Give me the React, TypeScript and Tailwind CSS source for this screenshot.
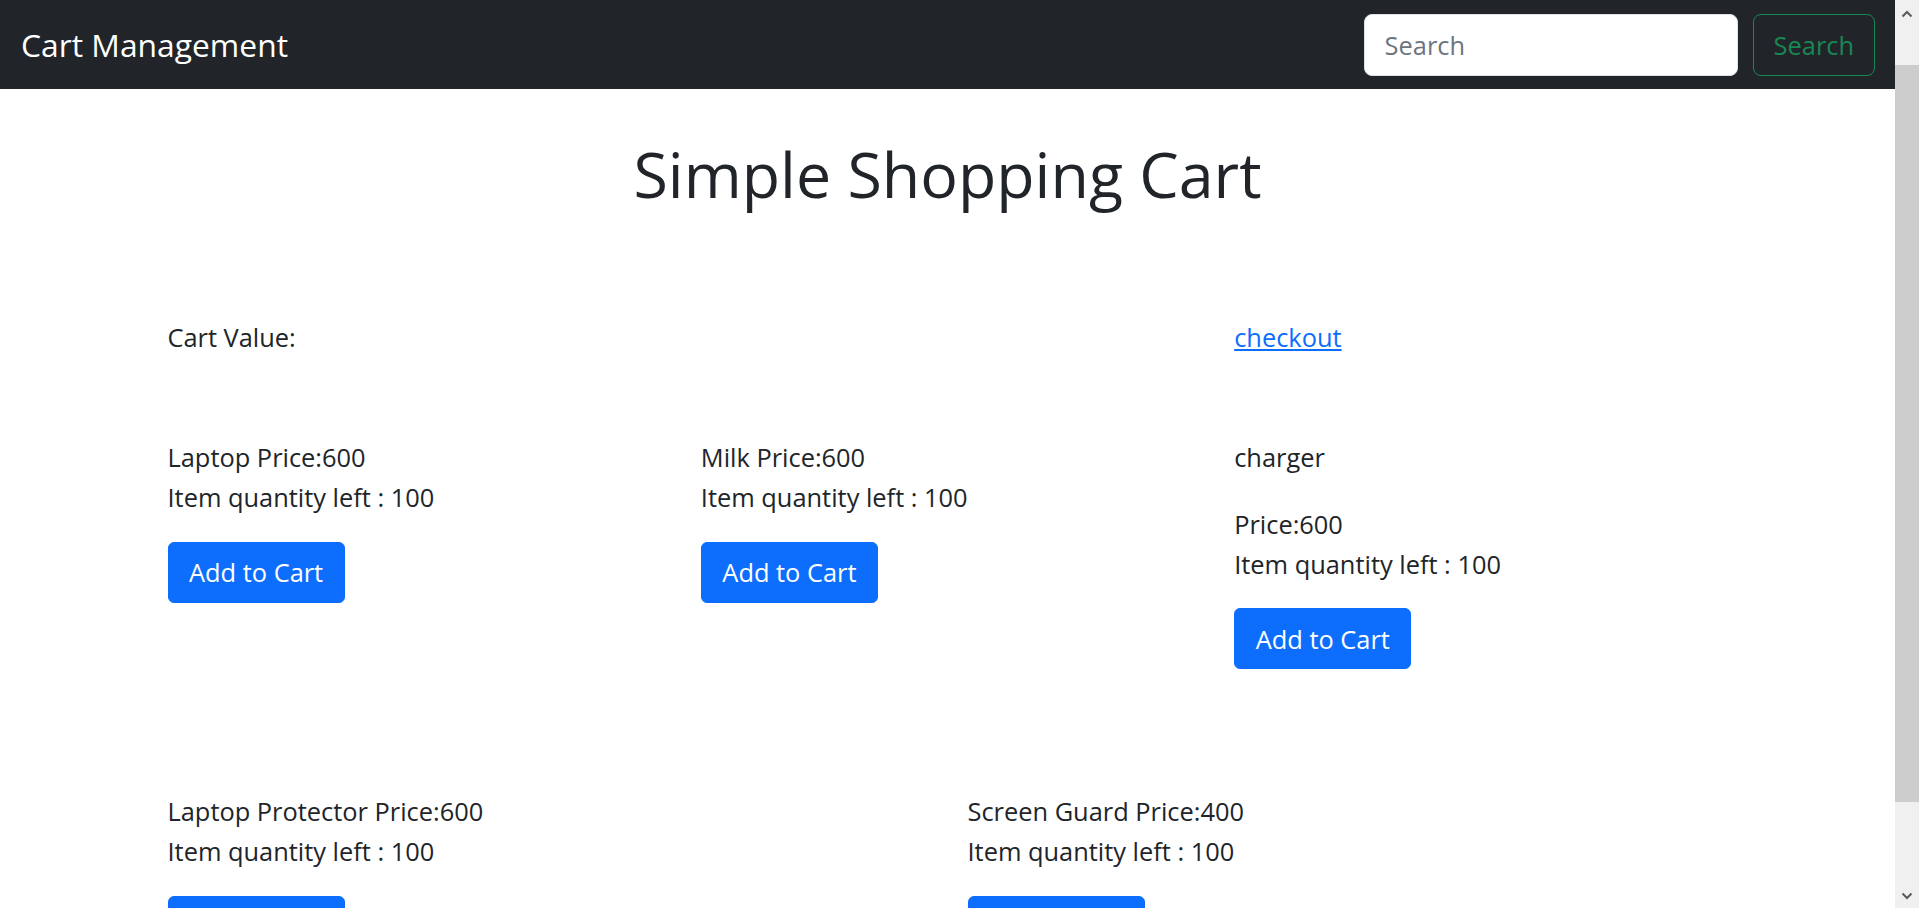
import React from 'react';

type Product = { name: string; price: number; qty: number; split?: boolean };

const TOP_ROW: Product[] = [
  { name: 'Laptop', price: 600, qty: 100 },
  { name: 'Milk', price: 600, qty: 100 },
  { name: 'charger', price: 600, qty: 100, split: true },
];

const BOTTOM_ROW: Product[] = [
  { name: 'Laptop Protector', price: 600, qty: 100 },
  { name: 'Screen Guard', price: 400, qty: 100 },
];

const ProductCard: React.FC<{ item: Product }> = ({ item }) => (
  <div>
    {item.split ? (
      <>
        <p className="mb-[26.7px]">{item.name}</p>
        <p>Price:{item.price}</p>
      </>
    ) : (
      <p>
        {item.name} Price:{item.price}
      </p>
    )}
    <p>Item quantity left : {item.qty}</p>
    <button
      type="button"
      className="mt-[24.5px] h-[61px] rounded-[6px] border border-[#0d6efd] bg-[#0d6efd] px-[20.5px] text-white"
    >
      Add to Cart
    </button>
  </div>
);

const Chevron: React.FC<{ down?: boolean }> = ({ down }) => (
  <svg width="12" height="8" viewBox="0 0 12 8" className="block">
    <path
      d={down ? 'M1.5 1.5 L6 6 L10.5 1.5' : 'M1.5 6.5 L6 2 L10.5 6.5'}
      fill="none"
      stroke="#5a5a5a"
      strokeWidth="2"
    />
  </svg>
);

export default function App() {
  return (
    <div className="flex h-[908px] w-full overflow-hidden bg-white font-['Open_Sans',sans-serif] text-[25.4px] leading-[40px] text-[#212529]">
      <div className="min-w-0 flex-1">
        <nav className="flex h-[89px] items-center justify-between bg-[#212529] px-[20px]">
          <span className="pl-[1px] text-[31.8px] leading-[50px] text-white">Cart Management</span>
          <form className="flex items-center gap-[15px]" onSubmit={(e) => e.preventDefault()}>
            <input
              type="search"
              placeholder="Search"
              className="h-[62px] w-[374px] rounded-[8px] border border-[#dee2e6] bg-white px-[20px] text-[#212529] outline-none placeholder:text-[#6c757d]"
            />
            <button
              type="submit"
              className="h-[62px] rounded-[8px] border border-[#198754] px-[20px] text-[#198754]"
            >
              Search
            </button>
          </form>
        </nav>

        <main className="mx-auto w-[1600px] px-[20px]">
          <h1 className="mt-[45px] text-center text-[62.7px] leading-[80px] font-normal">
            Simple Shopping Cart
          </h1>

          <div className="mt-[103px] grid grid-cols-3 gap-x-[40px]">
            <p>Cart Value:</p>
            <div />
            <a href="#" className="justify-self-start text-[#0d6efd] underline">
              checkout
            </a>
          </div>

          <div className="mt-[80px] grid grid-cols-3 gap-x-[40px]">
            {TOP_ROW.map((p) => (
              <ProductCard key={p.name} item={p} />
            ))}
          </div>

          <div className="mt-[122px] grid grid-cols-2 gap-x-[40px]">
            {BOTTOM_ROW.map((p) => (
              <ProductCard key={p.name} item={p} />
            ))}
          </div>
        </main>
      </div>

      {/* browser scrollbar */}
      <div className="flex w-[24px] shrink-0 flex-col bg-[#f0f0f0]">
        <div className="flex h-[28px] items-start justify-center pt-[10px]">
          <Chevron />
        </div>
        <div className="h-[37px]" />
        <div className="h-[737px] bg-[#cdcdcd]" />
        <div className="flex flex-1 items-end justify-center pb-[8px]">
          <Chevron down />
        </div>
      </div>
    </div>
  );
}
